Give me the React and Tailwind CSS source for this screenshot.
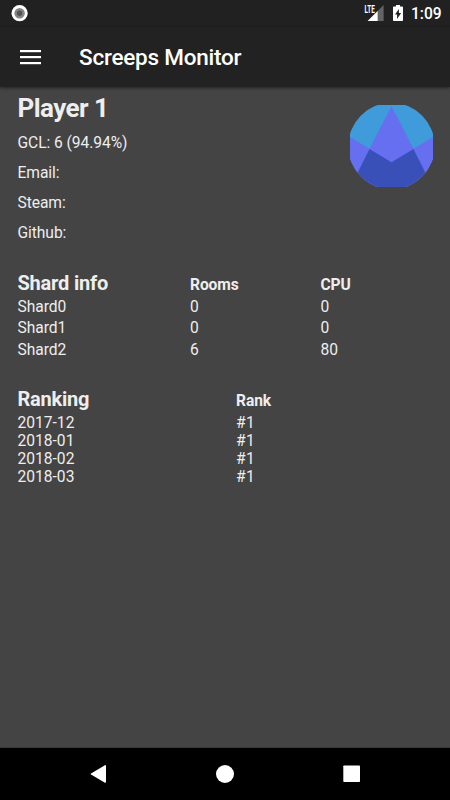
import React from 'react';

const profile = [
  { label: 'GCL:', value: '6 (94.94%)' },
  { label: 'Email:', value: '' },
  { label: 'Steam:', value: '' },
  { label: 'Github:', value: '' },
];

const shards = [
  { name: 'Shard0', rooms: 0, cpu: 0 },
  { name: 'Shard1', rooms: 0, cpu: 0 },
  { name: 'Shard2', rooms: 6, cpu: 80 },
];

const rankings = [
  { season: '2017-12', rank: 1 },
  { season: '2018-01', rank: 1 },
  { season: '2018-02', rank: 1 },
  { season: '2018-03', rank: 1 },
];

function StatusBar() {
  return (
    <div className="flex h-[27px] items-center bg-[#212121] pl-[11px] pr-[9px]">
      <svg width="17" height="17" viewBox="0 0 17 17">
        <circle cx="8.6" cy="8.2" r="8.1" fill="#fff" />
        <circle cx="8.6" cy="8.2" r="5.2" fill="#858585" />
        <circle cx="8.6" cy="8.2" r="2.7" fill="#555" />
      </svg>
      <div className="ml-auto flex h-full items-center">
        <svg width="20" height="27" viewBox="0 0 20 27">
          <path d="M19.6 5v16H3.6z" fill="#646464" />
          <path d="M13.6 11v10H3.6z" fill="#fff" />
          <rect x="0" y="4" width="11.5" height="9" fill="#212121" />
          <text
            x="0.6"
            y="12.6"
            fill="#fff"
            fontFamily="Roboto, sans-serif"
            fontSize="10"
            fontWeight="700"
            textLength="10.2"
            lengthAdjust="spacingAndGlyphs"
          >
            LTE
          </text>
        </svg>
        <svg className="ml-[9px]" width="11" height="27" viewBox="0 0 11 27">
          <path d="M3 5h4v1.6h2.2q.8 0 .8.8v12.8q0 .8-.8.8H.8q-.8 0-.8-.8V7.4q0-.8.8-.8h2.2z" fill="#fff" />
          <path d="M5.9 9v4h2.2l-4 6v-4.4H2z" fill="#212121" />
        </svg>
        <span className="ml-[7px] w-[30px] whitespace-nowrap pt-[2px] text-[15.6px] font-medium leading-[27px] text-white">
          1:09
        </span>
      </div>
    </div>
  );
}

function Header() {
  return (
    <header className="flex h-[60px] items-center bg-[#222222] pl-5 shadow-[0_1px_3px_rgba(0,0,0,0.5)]">
      <svg width="21" height="15" viewBox="0 0 21 15" fill="#fff">
        <rect y="0" width="21" height="2.2" />
        <rect y="6" width="21" height="2.2" />
        <rect y="12" width="21" height="2.2" />
      </svg>
      <h1 className="ml-[38px] pt-[2px] text-[22.5px] font-medium tracking-[-0.23px] text-white">
        Screeps Monitor
      </h1>
    </header>
  );
}

function Badge() {
  return (
    <svg width="83" height="83" viewBox="0 0 83 83">
      <defs>
        <clipPath id="badge">
          <circle cx="41.5" cy="41" r="43.2" />
        </clipPath>
      </defs>
      <g clipPath="url(#badge)">
        <rect width="83" height="82" fill="#3f9bd9" />
        <path d="M0 32l41.5 25L83 32v50H0z" fill="#666ff0" />
        <path d="M41.5 1L0 82h83z" fill="#666ff0" />
        <path d="M19.5 44l22 13.3 22-13.3L82.5 82H0.5z" fill="#3850b7" />
      </g>
    </svg>
  );
}

function NavBar() {
  return (
    <nav className="h-[52px] bg-black">
      <svg width="450" height="52" viewBox="0 0 450 52" fill="#fff">
        <path d="M91 25.4L104.5 17.4q1.5-.8 1.5.6v15.8q0 1.4-1.5.6L91 26.6q-1-.6 0-1.2z" />
        <circle cx="225" cy="26" r="9" />
        <rect x="343.3" y="17.5" width="16.7" height="16.5" rx="0.8" />
      </svg>
    </nav>
  );
}

function App() {
  return (
    <div className="flex h-[800px] w-[450px] flex-col overflow-hidden bg-[#444444] font-['Roboto',sans-serif] text-[#eeeeee]">
      <StatusBar />
      <Header />
      <main className="flex-1 border-b border-[#383838] pl-[17.5px] pt-[5px] text-[15.6px]">
        <section className="flex justify-between pr-[17px]">
          <div>
            <h2 className="text-[26px] font-bold leading-8 tracking-[-0.55px]">Player 1</h2>
            <div className="pt-1 tracking-[-0.06px]">
              {profile.map((item) => (
                <p key={item.label} className="h-[30px] leading-[30px]">
                  {item.label} {item.value}
                </p>
              ))}
            </div>
          </div>
          <div className="pt-[13px]">
            <Badge />
          </div>
        </section>

        <section className="pt-[22px]">
          <div className="grid h-[27px] grid-cols-[172.5px_130.5px_1fr] items-baseline font-bold leading-[26px]">
            <h3 className="text-[20px] tracking-[-0.2px]">Shard info</h3>
            <span className="tracking-[-0.1px]">Rooms</span>
            <span className="tracking-[-0.1px]">CPU</span>
          </div>
          {shards.map((shard) => (
            <div
              key={shard.name}
              className="grid grid-cols-[172.5px_130.5px_1fr] leading-[21.3px] tracking-[-0.06px]"
            >
              <span>{shard.name}</span>
              <span>{shard.rooms}</span>
              <span>{shard.cpu}</span>
            </div>
          ))}
        </section>

        <section className="pt-[25px]">
          <div className="grid h-[28px] grid-cols-[218.5px_1fr] items-baseline font-bold leading-[26px]">
            <h3 className="text-[20px] tracking-[-0.25px]">Ranking</h3>
            <span className="tracking-[-0.1px]">Rank</span>
          </div>
          {rankings.map((item) => (
            <div key={item.season} className="grid grid-cols-[218.5px_1fr] leading-[18px]">
              <span>{item.season}</span>
              <span className="tracking-[0.5px]">#{item.rank}</span>
            </div>
          ))}
        </section>
      </main>
      <NavBar />
    </div>
  );
}

export default App;
